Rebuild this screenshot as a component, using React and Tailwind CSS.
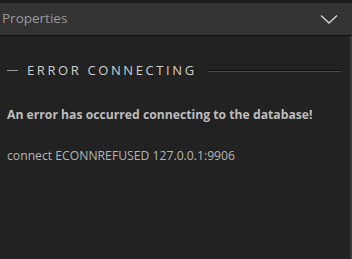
export default function App() {
  return (
    <div className="w-[352px] h-[259px] bg-[#222222] flex flex-col overflow-hidden" style={{ fontFamily: '"Open Sans", sans-serif' }}>
      <div className="h-[3px] bg-[#1c1c1c]" />
      <div className="h-[32px] bg-[#333333] flex items-center justify-between pl-[2px] pr-[14px]">
        <span className="text-[13.5px] text-[#9b9b9b] leading-none">Properties</span>
        <svg width="18" height="11" viewBox="0 0 18 11" fill="none">
          <path d="M1 1.5 L9 9 L17 1.5" stroke="#cfcfcf" strokeWidth="1.5" />
        </svg>
      </div>
      <div className="h-[1px] bg-[#161616]" />
      <div className="flex-1 flex border-r-2 border-[#3b3b3b]">
        <div className="flex-1 flex flex-col pl-[7px] pr-[9px]">
          <div className="flex items-center mt-[28px]">
            <div className="w-[11px] h-[1px] bg-[#9a9a9a]" />
            <span className="ml-[9px] mr-[11px] text-[13px] tracking-[0.2em] text-[#d0d0d0] leading-none">ERROR CONNECTING</span>
            <div className="flex-1 flex flex-col">
              <div className="h-[1px] bg-[#0e0e0e]" />
              <div className="h-[1px] bg-[#4a4a4a]" />
            </div>
          </div>
          <div className="mt-[32px] text-[12.2px] font-bold text-[#bdbdbd] leading-none">An error has occurred connecting to the database!</div>
          <div className="mt-[29px] text-[12.2px] text-[#b5b5b5] leading-none">connect ECONNREFUSED 127.0.0.1:9906</div>
        </div>
      </div>
    </div>
  );
}
